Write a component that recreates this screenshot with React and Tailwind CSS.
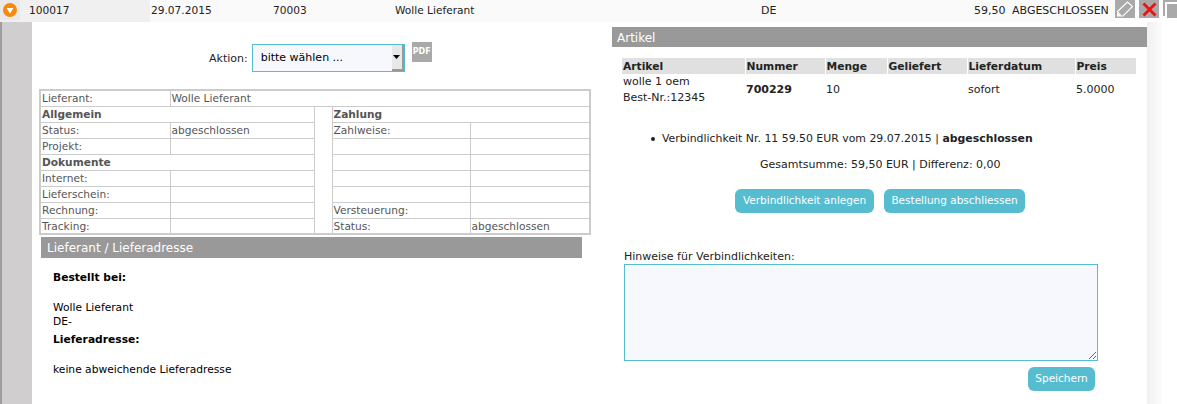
import React from "react";

const FONT = "font-['DejaVu_Sans',sans-serif]";

const LEFT_ROWS = [
  { a: "Status:", b: "abgeschlossen", c: "Zahlweise:", d: "" },
  { a: "Projekt:", b: "", c: "", d: "" },
  { head: "Dokumente", c: "", d: "" },
  { a: "Internet:", b: "", c: "", d: "" },
  { a: "Lieferschein:", b: "", c: "", d: "" },
  { a: "Rechnung:", b: "", c: "Versteuerung:", d: "" },
  { a: "Tracking:", b: "", c: "Status:", d: "abgeschlossen" },
];

const cell = "border border-[#ccc] px-[1px] pt-[1px] pb-0 h-[16px] leading-[13px] align-top";

function InfoTable() {
  return (
    <table className="w-[550px] table-fixed border-collapse border-2 border-[#ccc] text-[10.6px] text-[#555]">
      <colgroup>
        <col className="w-[130px]" />
        <col className="w-[144px]" />
        <col className="w-[18px]" />
        <col className="w-[138px]" />
        <col className="w-[120px]" />
      </colgroup>
      <tbody>
        <tr>
          <td className={cell}>Lieferant:</td>
          <td className={cell} colSpan={4}>Wolle Lieferant</td>
        </tr>
        <tr>
          <td className={`${cell} font-bold`} colSpan={2}>Allgemein</td>
          <td className={cell} rowSpan={8}></td>
          <td className={`${cell} font-bold`} colSpan={2}>Zahlung</td>
        </tr>
        {LEFT_ROWS.map((r, i) => (
          <tr key={i}>
            {r.head ? (
              <td className={`${cell} font-bold`} colSpan={2}>{r.head}</td>
            ) : (
              <>
                <td className={cell}>{r.a}</td>
                <td className={cell}>{r.b}</td>
              </>
            )}
            <td className={cell}>{r.c}</td>
            <td className={cell}>{r.d}</td>
          </tr>
        ))}
      </tbody>
    </table>
  );
}

function Btn({ children, className = "" }) {
  return (
    <button className={`h-[24px] rounded-[6px] bg-[#56bdd1] text-[10.5px] text-white ${className}`}>
      {children}
    </button>
  );
}

function ArtikelTable() {
  const th = "bg-[#e0e0e0] border-r border-white h-[16px] p-0 pl-[1px] pt-[1px] text-left text-[10.7px] font-bold leading-[15px]";
  const td = "p-0 pl-[1px]";
  return (
    <table className="ml-[10px] w-[514px] table-fixed border-collapse text-[11px] text-[#222]">
      <colgroup>
        <col className="w-[123px]" />
        <col className="w-[80px]" />
        <col className="w-[62px]" />
        <col className="w-[80px]" />
        <col className="w-[108px]" />
        <col className="w-[61px]" />
      </colgroup>
      <thead>
        <tr>
          <th className={th}>Artikel</th>
          <th className={th}>Nummer</th>
          <th className={th}>Menge</th>
          <th className={th}>Geliefert</th>
          <th className={th}>Lieferdatum</th>
          <th className={th}>Preis</th>
        </tr>
      </thead>
      <tbody>
        <tr>
          <td className="p-0 pl-[1px] leading-[16px]">wolle 1 oem<br />Best-Nr.:12345</td>
          <td className={`${td} font-bold`}>700229</td>
          <td className={td}>10</td>
          <td className={td}></td>
          <td className={td}>sofort</td>
          <td className={td}>5.0000</td>
        </tr>
      </tbody>
    </table>
  );
}

export default function App() {
  return (
    <div className={`h-[404px] w-[1177px] overflow-hidden bg-white text-[11px] text-[#222] ${FONT}`}>
      {/* order row */}
      <div className="flex h-[22px] items-stretch">
        <div className="flex w-[1115px] items-center bg-[#fafafa]">
          <div className="flex h-full w-[150px] shrink-0 items-center bg-[#f0f0f0]">
            <div className="flex h-[20px] w-[20px] items-center justify-center self-start bg-[#e9e9e9]">
              <span className="flex h-[14px] w-[14px] items-center justify-center rounded-full bg-[#f7890c]">
                <svg width="8" height="7" viewBox="0 0 8 7"><path d="M0.5 1h7L4 6.5z" fill="#fff" /></svg>
              </span>
            </div>
            <span className="ml-[9px] text-[10.6px]">100017</span>
          </div>
          <span className="w-[122px] shrink-0 pl-[1px] text-[10.6px]">29.07.2015</span>
          <span className="w-[122px] shrink-0 pl-[1px] text-[10.6px]">70003</span>
          <span className="w-[367px] shrink-0 pl-[1px] text-[10.6px]">Wolle Lieferant</span>
          <span className="w-[213px] shrink-0">DE</span>
          <span className="w-[34px] shrink-0">59,50</span>
          <span className="ml-[4px] whitespace-nowrap">ABGESCHLOSSEN</span>
        </div>
        <div className="flex h-[20px] w-[62px] gap-[4px]">
          <span className="flex h-[18px] w-[20px] items-center justify-center bg-[#a9a9a9]">
            <svg width="20" height="18" viewBox="0 0 20 18" fill="none">
              <path d="M2.5 11.5 12.5 2l5 4.5L8 16H6.5z" stroke="#fff" strokeWidth="1.1" />
              <path d="M2 12l4.5 4.5H2z" fill="#fff" />
            </svg>
          </span>
          <span className="flex h-[18px] w-[20px] items-center justify-center bg-[#a9a9a9]">
            <svg width="15" height="15" viewBox="0 0 15 15"><path d="M1.5 1.5l12 12M13.5 1.5l-12 12" stroke="#f01010" strokeWidth="2.8" /></svg>
          </span>
          <span className="relative h-[18px] w-[14px] overflow-hidden">
            <span className="absolute left-0 top-0 h-[16px] w-[14px] border-l-2 border-t-2 border-[#a9a9a9]" />
            <span className="absolute left-[4px] top-[4px] h-[14px] w-[10px] bg-[#a9a9a9]" />
          </span>
        </div>
      </div>

      <div className="flex h-[382px]">
        <div className="w-[2px] shrink-0 bg-[#a39c9e]" />
        <div className="w-[30px] shrink-0 bg-[#d0cece]" />

        {/* left column */}
        <div className="w-[580px] shrink-0">
          <div className="flex h-[67px] items-start pt-[22px]">
            <span className="ml-[177px] mt-[7px]">Aktion:</span>
            <div className="ml-[4px] flex h-[28px] w-[153px] items-center border border-[#56bdd1] bg-[#f7f8fe] pl-[8px] text-[11px] text-black">
              <span className="flex-1">bitte wählen ...</span>
              <span className="flex h-full w-[12px] items-center justify-center border-b-2 border-r-2 border-[#999] bg-[#e8e8e8]">
                <svg width="7" height="4" viewBox="0 0 7 4"><path d="M0 0h7L3.5 4z" fill="#000" /></svg>
              </span>
            </div>
            <span className="ml-[7px] -mt-[2px] flex h-[20px] w-[20px] items-center justify-center bg-[#a9a9a9] text-[8px] font-bold text-white">PDF</span>
          </div>
          <div className="ml-[7px]"><InfoTable /></div>
          <div className="ml-[9px] mt-[2px] h-[21px] w-[541px] bg-[#999] pl-[6px] text-[12px] leading-[22px] text-white">
            Lieferant / Lieferadresse
          </div>
          <div className="ml-[21px] mt-[12px] text-[10.7px] text-black">
            <div className="font-bold leading-[15px]">Bestellt bei:</div>
            <div className="mt-[15px] leading-[15px]">Wolle Lieferant</div>
            <div className="leading-[14px]">DE-</div>
            <div className="mt-[3px] font-bold leading-[15px]">Lieferadresse:</div>
            <div className="mt-[15px] leading-[15px]">keine abweichende Lieferadresse</div>
          </div>
        </div>

        {/* right column */}
        <div className="h-full w-[535px] shrink-0 pt-[5px]">
          <div className="h-[20px] bg-[#999] pl-[5px] pt-[1px] text-[12px] leading-[20px] text-white">Artikel</div>
          <div className="mt-[11px]"><ArtikelTable /></div>
          <div className="ml-[39px] mt-[25px] flex items-center text-[10.9px]">
            <span className="mr-[7px] h-[4px] w-[4px] rounded-full bg-[#222]" />
            <span>Verbindlichkeit Nr. 11 59.50 EUR vom 29.07.2015 | <b>abgeschlossen</b></span>
          </div>
          <div className="ml-[148px] mt-[10px]">Gesamtsumme: 59,50 EUR | Differenz: 0,00</div>
          <div className="ml-[123px] mt-[15px] flex gap-[10px]">
            <Btn className="w-[139px]">Verbindlichkeit anlegen</Btn>
            <Btn className="w-[141px]">Bestellung abschliessen</Btn>
          </div>
          <div className="ml-[12px] mt-[38px] leading-[11px]">Hinweise für Verbindlichkeiten:</div>
          <textarea className="ml-[12px] mt-[2px] block h-[97px] w-[474px] border border-[#56bdd1] bg-[#f7f8fe]" />
          <div className="ml-[416px] mt-[6px]"><Btn className="w-[67px]">Speichern</Btn></div>
        </div>

        <div className="w-[15px] shrink-0 bg-gradient-to-r from-[#f0f0f0] to-[#fcfcfc]" />
      </div>
    </div>
  );
}
